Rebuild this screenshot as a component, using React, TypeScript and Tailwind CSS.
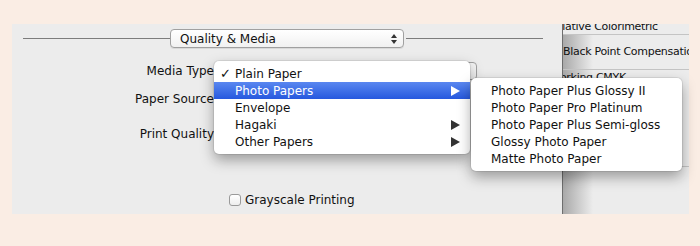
import { useState } from "react";

const MEDIA = [
  { label: "Plain Paper", checked: true },
  { label: "Photo Papers", sub: true, active: true },
  { label: "Envelope" },
  { label: "Hagaki", sub: true },
  { label: "Other Papers", sub: true },
];

const PHOTO = [
  "Photo Paper Plus Glossy II",
  "Photo Paper Pro Platinum",
  "Photo Paper Plus Semi-gloss",
  "Glossy Photo Paper",
  "Matte Photo Paper",
];

const Tri = ({ white }: { white?: boolean }) => (
  <svg width="9" height="10" viewBox="0 0 9 10">
    <path d="M0 0 L9 5 L0 10 Z" fill={white ? "#ffffff" : "#333333"} />
  </svg>
);

const App = () => {
  const [gray, setGray] = useState(false);

  return (
    <div
      className="relative w-[700px] h-[246px] bg-[#faede4] pt-[24px] pl-[12px] text-[12px] text-[#111] overflow-hidden"
      style={{ fontFamily: '"DejaVu Sans", "Lucida Grande", sans-serif' }}
    >
      <div className="flex h-[190px]">
        {/* ── Print dialog pane ── */}
        <div className="relative w-[550px] h-full bg-[#ececec]">
          <div className="flex items-center h-[19px] mt-[5px]">
            <div className="ml-[11px] w-[147px] h-px bg-[#7c7c7c]" />
            <div className="flex items-center justify-between w-[234px] h-[19px] rounded-[4px] border border-[#a0a0a0] bg-gradient-to-b from-white to-[#f1f1f1] shadow-[0_1px_0_rgba(0,0,0,0.08)] pl-[9px] pr-[6px]">
              <span>Quality &amp; Media</span>
              <svg width="6" height="10" viewBox="0 0 6 10">
                <path d="M0 4 L3 0 L6 4 Z M0 6 L3 10 L6 6 Z" fill="#333" />
              </svg>
            </div>
            <div className="ml-[2px] w-[137px] h-px bg-[#7c7c7c]" />
          </div>

          <div className="flex flex-col items-end w-[202px] mt-[15px]">
            <span className="leading-[17px]">Media Type</span>
            <span className="leading-[17px] mt-[11px]">Paper Source</span>
            <span className="leading-[17px] mt-[18px]">Print Quality</span>
          </div>

          {/* media popup behind the menu */}
          <div className="absolute left-[202px] top-[38px] w-[263px] h-[18px] rounded-[4px] border border-[#a0a0a0] bg-[#f4f4f4]" />

          <label className="absolute left-[217px] top-[167px] flex items-center gap-[4px]">
            <input
              type="checkbox"
              checked={gray}
              onChange={(e) => setGray(e.target.checked)}
              className="appearance-none w-[12px] h-[12px] rounded-[3px] border border-[#9a9a9a] bg-gradient-to-b from-white to-[#eeeeee]"
            />
            <span>Grayscale Printing</span>
          </label>
        </div>

        {/* ── Colour settings pane, partly covered ── */}
        <div className="relative w-[127px] h-full bg-[#ececec] overflow-hidden border-l border-[#6e6e6e] text-[11px] tracking-[-0.3px]">
          <div className="absolute inset-y-0 left-0 w-[30px] bg-gradient-to-r from-[#a9a9a9] to-transparent" />
          <div className="relative flex flex-col whitespace-nowrap">
            <div className="h-[11px] border-b border-[#c4c4c4] bg-[#ececec]">
              <span className="block -mt-[5px] -ml-[14px]">Relative Colorimetric</span>
            </div>
            <div className="h-[35px] flex items-center border-b border-[#c4c4c4]">
              <span>Black Point Compensation</span>
            </div>
            <div className="h-[12px] -ml-[13px] leading-[16px]">Working CMYK</div>
            <div className="h-[85px] border-b border-[#c4c4c4]" />
          </div>
        </div>
      </div>

      {/* ── Media type menu ── */}
      <div className="absolute left-[214px] top-[61px] w-[256px] py-[4px] bg-white rounded-[5px] shadow-[0_6px_14px_rgba(0,0,0,0.35),0_0_0_1px_rgba(0,0,0,0.08)]">
        {MEDIA.map((m) => (
          <div
            key={m.label}
            className={
              "flex items-center h-[17px] pr-[10px] " +
              (m.active ? "bg-gradient-to-b from-[#5a87f0] to-[#2658de] text-white" : "")
            }
          >
            <span className="w-[21px] pl-[6px] text-[13px] leading-[17px]">{m.checked ? "✓" : ""}</span>
            <span className="flex-1">{m.label}</span>
            {m.sub && <Tri white={m.active} />}
          </div>
        ))}
      </div>

      {/* ── Photo papers submenu ── */}
      <div className="absolute left-[471px] top-[78px] w-[211px] py-[4px] bg-white rounded-[5px] shadow-[0_6px_14px_rgba(0,0,0,0.35),0_0_0_1px_rgba(0,0,0,0.08)]">
        {PHOTO.map((p) => (
          <div key={p} className="flex items-center h-[17px] pl-[20px]">
            {p}
          </div>
        ))}
      </div>
    </div>
  );
};

export default App;
